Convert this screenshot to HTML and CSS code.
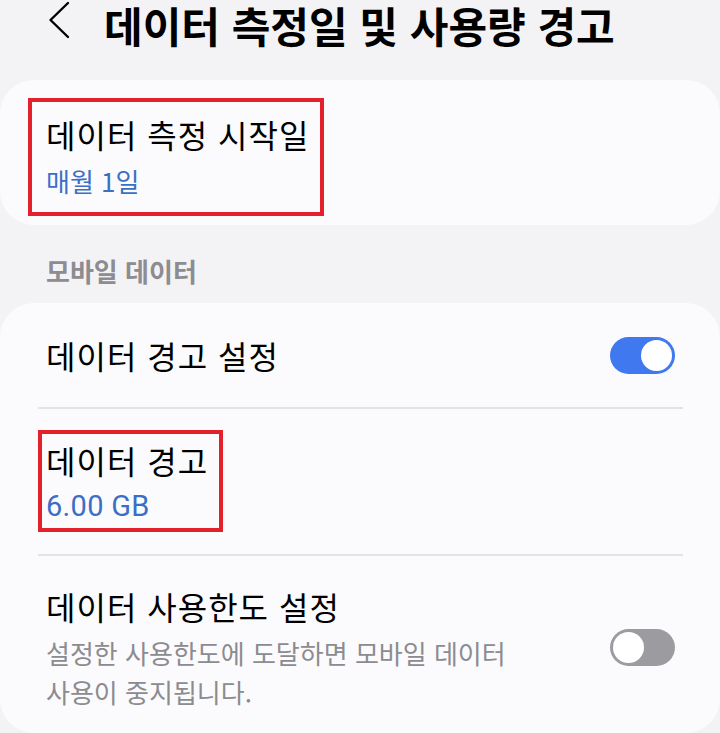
FILE: index.html
```html
<!DOCTYPE html>
<html lang="ko">
<head>
<meta charset="utf-8">
<title>데이터 측정일 및 사용량 경고</title>
<link rel="stylesheet" href="styles.css">
</head>
<body>
<div class="screen">
  <header class="topbar">
    <button class="back" aria-label="뒤로">
      <svg width="22" height="38" viewBox="0 0 22 38" aria-hidden="true">
        <polyline points="20,2 2.5,19 20,36" fill="none" stroke="#000" stroke-width="2.4" stroke-linecap="round" stroke-linejoin="round"/>
      </svg>
    </button>
    <h1 class="page-title">데이터 측정일 및 사용량 경고</h1>
  </header>

  <section class="card card-single">
    <div class="item-text mark mark-cycle">
      <div class="item-title">데이터 측정 시작일</div>
      <div class="item-value">매월 1일</div>
    </div>
  </section>

  <div class="section-label">모바일 데이터</div>

  <section class="card card-list">
    <div class="row row-switch">
      <div class="item-title">데이터 경고 설정</div>
      <span class="switch is-on"></span>
    </div>
    <div class="row">
      <div class="item-text mark mark-warn">
        <div class="item-title">데이터 경고</div>
        <div class="item-value item-value-num">6.00 GB</div>
      </div>
    </div>
    <div class="row row-switch row-last">
      <div class="item-text">
        <div class="item-title">데이터 사용한도 설정</div>
        <div class="item-desc">설정한 사용한도에 도달하면 모바일 데이터 사용이 중지됩니다.</div>
      </div>
      <span class="switch"></span>
    </div>
  </section>
</div>
</body>
</html>
```

FILE: styles.css
```css
*,
*::before,
*::after {
  box-sizing: border-box;
}

html,
body {
  margin: 0;
  padding: 0;
}

body {
  background: #f3f3f6;
  font-family: "Noto Sans CJK KR", "Noto Sans", sans-serif;
  color: #000;
  word-break: keep-all;
}

.screen {
  width: 720px;
  height: 733px;
  overflow: hidden;
  display: flex;
  flex-direction: column;
}

/* top bar */
.topbar {
  height: 80px;
  display: flex;
  align-items: flex-start;
}

.back {
  margin: 1px 0 0 48px;
  padding: 0;
  border: 0;
  background: none;
  width: 22px;
  height: 38px;
  display: flex;
}

.page-title {
  margin: 0 0 0 34px;
  font-size: 42px;
  line-height: 50px;
  font-weight: 700;
  letter-spacing: 0;
}

/* cards */
.card {
  background: #fbfbfd;
  border-radius: 34px;
}

.card-single {
  padding: 32px 46px 25px;
}

.card-list {
  padding: 0 37px 0 38px;
  flex: 1;
}

.row {
  display: flex;
  align-items: center;
  padding: 29px 8px 29px;
  border-top: 2px solid #e3e3e6;
}

.row:first-child {
  border-top: 0;
  padding-top: 30px;
  padding-bottom: 30px;
}

.row-last {
  padding-top: 28px;
  padding-bottom: 19px;
}

.row-switch {
  gap: 50px;
}

.row-switch .item-title,
.row-switch .item-text {
  flex: 1;
}

.item-text {
  display: flex;
  flex-direction: column;
}

.item-title {
  font-size: 32px;
  line-height: 44px;
  letter-spacing: 1px;
}

.item-value {
  margin-top: 6px;
  font-size: 26px;
  line-height: 38px;
  color: #3b6fc6;
}

.item-value-num {
  font-family: Roboto, "Noto Sans CJK KR", sans-serif;
  font-size: 29px;
  margin-top: 5px;
  letter-spacing: 0.3px;
}

.item-desc {
  margin-top: 5px;
  max-width: 530px;
  font-size: 26px;
  line-height: 39px;
  color: #8c8c90;
}

.section-label {
  padding: 28px 46px 14px;
  font-size: 26px;
  line-height: 36px;
  font-weight: 700;
  color: #8c8c91;
}

/* switches */
.switch {
  position: relative;
  flex: none;
  width: 65px;
  height: 37px;
  border-radius: 19px;
  background: #9c9ca0;
}

.switch::after {
  content: "";
  position: absolute;
  top: 3px;
  left: 3px;
  width: 31px;
  height: 31px;
  border-radius: 50%;
  background: #fff;
}

.switch.is-on {
  background: #3f78ef;
}

.switch.is-on::after {
  left: auto;
  right: 3px;
}

/* red highlight boxes drawn over the entries */
.mark {
  position: relative;
  align-self: flex-start;
}

.mark::after {
  content: "";
  position: absolute;
  border: 4px solid #e2212b;
  pointer-events: none;
}

.mark-cycle::after {
  left: -18px;
  top: -14px;
  width: 296px;
  height: 118px;
}

.mark-warn::after {
  left: -8px;
  top: -8px;
  width: 185px;
  height: 102px;
}
```
